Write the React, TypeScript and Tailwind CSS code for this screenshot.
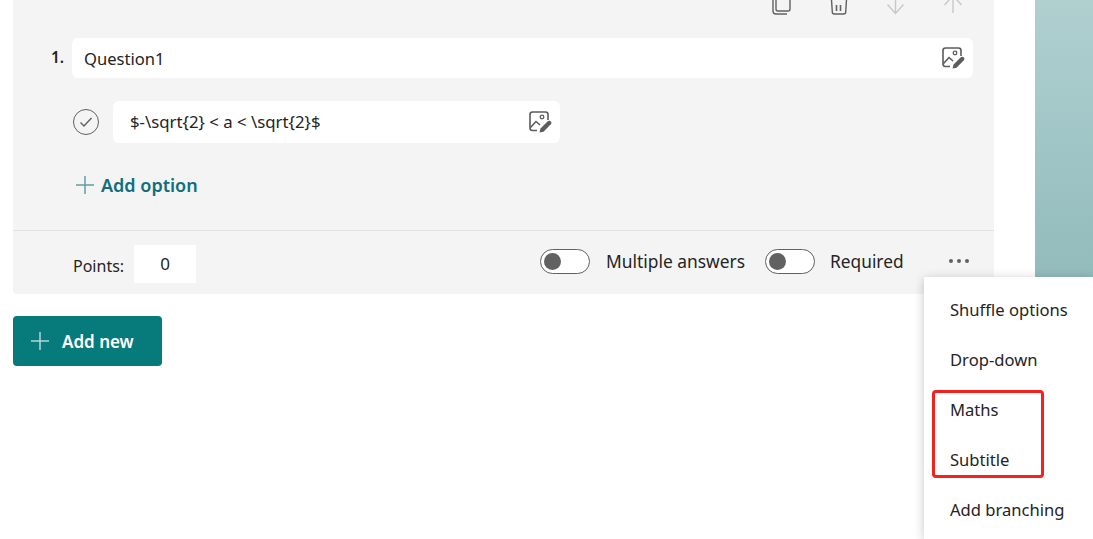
import React from "react";

const ImageEdit = () => (
  <svg width="24" height="24" viewBox="0 0 24 24" fill="none" className="block">
    <path d="M9 20.500H4.500A2.500 2.500 0 0 1 2 18V4.500A2.500 2.500 0 0 1 4.500 2h13A2.500 2.500 0 0 1 20 4.500V10" stroke="#5c5c5c" strokeWidth="1.600" />
    <circle cx="14" cy="7" r="1.800" stroke="#5c5c5c" strokeWidth="1.300" />
    <path d="M2.500 17.500 8 11.500 12 15" stroke="#5c5c5c" strokeWidth="1.600" />
    <path d="M11.500 22.500 12.500 18.500 19.500 11.500c1-1 2.600-.9 3.400 0 .8.900.7 2.100-.3 3.100L15.500 21.700l-4 .8Z" fill="#5c5c5c" />
  </svg>
);

const Toggle = () => (
  <div className="flex h-[25px] w-[50px] items-center rounded-full border border-[#616161] bg-white pl-[3px]">
    <div className="h-[17px] w-[17px] rounded-full bg-[#616161]" />
  </div>
);

const ToolIcon = ({ children, className }: { children: React.ReactNode; className: string }) => (
  <svg width="24" height="24" viewBox="0 0 24 24" fill="none" className={className}>
    {children}
  </svg>
);

const menuItems = ["Shuffle options", "Drop-down", "Maths", "Subtitle", "Add branching"];

export default function App() {
  return (
    <div
      className="relative flex h-[539px] w-[1093px] overflow-hidden bg-white text-[16.600px] text-[#242424]"
      style={{ fontFamily: '"Noto Sans", "Open Sans", sans-serif' }}
    >
      <div className="w-[1035px] pl-[13px]">
        <div className="w-[981px] rounded-b-[4px] bg-[#f4f4f4]">
          <div className="h-[16px] overflow-hidden">
            <div className="-mt-[8px] flex items-start">
              <ToolIcon className="ml-[758px]">
                <path d="M5 0v17a2 2 0 0 0 2 2h10a2 2 0 0 0 2-2V0" stroke="#616161" strokeWidth="1.400" />
                <path d="M2 0v19a3 3 0 0 0 3 3h11" stroke="#616161" strokeWidth="1.400" />
              </ToolIcon>
              <ToolIcon className="ml-[33px]">
                <path d="M3 0 4.300 20A2 2 0 0 0 6.300 22H15.700a2 2 0 0 0 2-2L19 0" stroke="#616161" strokeWidth="1.400" />
                <path d="M8.500 13v6M12.500 13v6" stroke="#616161" strokeWidth="1.600" />
              </ToolIcon>
              <ToolIcon className="ml-[33px]">
                <path d="M10.500 0v21M2.500 12.500 10.500 21.500l8-9" stroke="#c8c8c8" strokeWidth="1.400" />
              </ToolIcon>
              <ToolIcon className="ml-[33px]">
                <path d="M11 21V3.500M2.500 13 11 3.500 19.500 13" stroke="#c8c8c8" strokeWidth="1.400" />
              </ToolIcon>
            </div>
          </div>

          <div className="mt-[22px] flex items-center pl-[39px] pr-[21px]">
            <span className="-ml-[1px] w-[21px] text-[15.500px] font-semibold">1.</span>
            <div className="flex h-[40px] flex-1 items-center justify-between rounded-[6px] bg-white pl-[12px] pr-[8px]">
              <span className="mt-[2px]">Question1</span>
              <ImageEdit />
            </div>
          </div>

          <div className="mt-[23px] flex items-center pl-[60px]">
            <div className="flex h-[26px] w-[26px] items-center justify-center rounded-full border-[1.500px] border-[#616161]">
              <svg width="14" height="14" viewBox="0 0 14 14" fill="none">
                <path d="M1.500 7.500 5 11 12.500 3" stroke="#616161" strokeWidth="1.400" />
              </svg>
            </div>
            <div className="ml-[14px] flex h-[42px] w-[447px] items-center justify-between rounded-[6px] bg-white pl-[17px] pr-[8px]">
              <span className="text-[16.800px]">{"$-\\sqrt{2} < a < \\sqrt{2}$"}</span>
              <ImageEdit />
            </div>
          </div>

          <div className="mt-[29px] flex h-[26px] items-center pl-[63px] text-[#0f6f7c]">
            <svg width="18" height="18" viewBox="0 0 18 18" fill="none">
              <path d="M9 0v18M0 9h18" stroke="#5f9ea3" strokeWidth="1.500" />
            </svg>
            <span className="ml-[7px] text-[18px] font-semibold">Add option</span>
          </div>

          <div className="mt-[32px] h-px bg-[#e1e1e1]" />

          <div className="flex h-[63px] items-center pl-[60px]">
            <span className="mt-[6px] w-[52px] text-[16px]">Points:</span>
            <div className="mt-[2px] ml-[9px] flex h-[38px] w-[62px] items-center justify-center bg-white text-[17px]">
              0
            </div>
            <div className="ml-[344px] -mt-[3px] flex items-center">
              <Toggle />
              <span className="ml-[16px] text-[17.400px]">Multiple answers</span>
              <div className="ml-[20px]">
                <Toggle />
              </div>
              <span className="ml-[15px] mt-[1px] text-[17.300px]">Required</span>
              <div className="ml-[45px] flex gap-[4px]">
                <div className="h-[4px] w-[4px] rounded-full bg-[#616161]" />
                <div className="h-[4px] w-[4px] rounded-full bg-[#616161]" />
                <div className="h-[4px] w-[4px] rounded-full bg-[#616161]" />
              </div>
            </div>
          </div>
        </div>

        <div className="mt-[22px] flex h-[50px] w-[149px] items-center rounded-[4px] bg-[#077a7c] pl-[18px] font-semibold text-white">
          <svg width="18" height="18" viewBox="0 0 18 18" fill="none">
            <path d="M9 0v18M0 9h18" stroke="#b5d6d6" strokeWidth="1.500" />
          </svg>
          <span className="ml-[13px] mt-[2px] text-[17px]">Add new</span>
        </div>
      </div>

      <div className="flex-1 bg-linear-to-b from-[#b0d0d0] to-[#76a8aa]" />

      <div className="absolute left-[924px] top-[277px] h-[262px] w-[169px] bg-white pl-[26px] pt-[8px] shadow-[0_2px_10px_rgba(0,0,0,0.22)]">
        {menuItems.map((item) => (
          <div key={item} className="flex h-[50px] items-center whitespace-nowrap">
            {item}
          </div>
        ))}
      </div>

      <div className="absolute left-[932px] top-[390px] h-[88px] w-[112px] rounded-[4px] border-[3px] border-[#f5211c]" />
    </div>
  );
}
